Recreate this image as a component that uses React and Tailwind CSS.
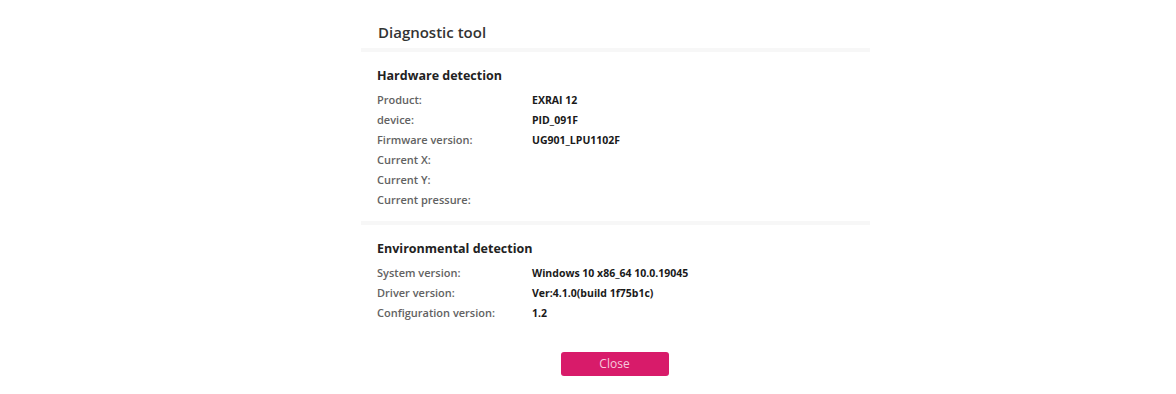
import React from 'react';

const hardware = [
    { label: 'Product:', value: 'EXRAI 12' },
    { label: 'device:', value: 'PID_091F' },
    { label: 'Firmware version:', value: 'UG901_LPU1102F' },
    { label: 'Current X:', value: '' },
    { label: 'Current Y:', value: '' },
    { label: 'Current pressure:', value: '' },
];

const environment = [
    { label: 'System version:', value: 'Windows 10 x86_64 10.0.19045' },
    { label: 'Driver version:', value: 'Ver:4.1.0(build 1f75b1c)' },
    { label: 'Configuration version:', value: '1.2' },
];

const InfoRow = ({ label, value }) => (
    <div className="flex h-5 items-center leading-5">
        <span className="w-[155px] shrink-0 text-[11px] font-semibold text-[#626262]">{label}</span>
        <span className="text-[10.5px] font-bold text-[#1a1a1a]">{value}</span>
    </div>
);

const Section = ({ title, rows }) => (
    <section className="px-4">
        <h2 className="h-5 text-[12.5px] font-bold leading-5 text-[#222]">{title}</h2>
        <div className="mt-[4px]">
            {rows.map(row => (
                <InfoRow key={row.label} {...row} />
            ))}
        </div>
    </section>
);

const App = () => {
    return (
        <div className="h-[394px] w-full bg-white" style={{ fontFamily: '"Open Sans", "Noto Sans", sans-serif' }}>
            <div className="ml-[361px] w-[509px]">
                {/* Header */}
                <header className="px-[17px] pt-[22px] pb-[6px]">
                    <h1 className="text-[15px] font-semibold leading-5 text-[#333]">Diagnostic tool</h1>
                </header>
                <div className="h-[4px] bg-[#f7f7f7]" />

                <div className="pt-[14px] pb-[11px]">
                    <Section title="Hardware detection" rows={hardware} />
                </div>
                <div className="h-[4px] bg-[#f7f7f7]" />

                <div className="pt-[14px]">
                    <Section title="Environmental detection" rows={environment} />
                </div>

                <div className="mt-[29px] flex justify-center pr-[2px]">
                    <button className="h-[24px] w-[108px] rounded-[3px] bg-[#d81b6a] text-[12px] text-[#f6c9dc]">
                        Close
                    </button>
                </div>
            </div>
        </div>
    );
};

export default App;
